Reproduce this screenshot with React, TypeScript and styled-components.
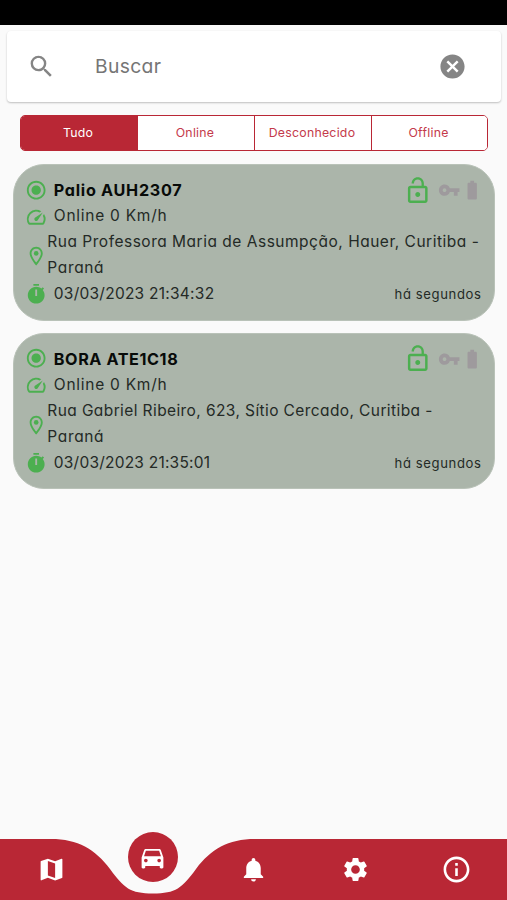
import React from "react";
import styled, { createGlobalStyle } from "styled-components";
import {
  MdSearch, MdCancel, MdRadioButtonChecked, MdLockOpen, MdVpnKey, MdBatteryFull,
  MdMap, MdDirectionsCar, MdNotifications, MdSettings, MdInfoOutline,
  MdOutlineSpeed, MdOutlineLocationOn,
} from "react-icons/md";

const red = "#b92735";
const green = "#4caf50";

const Global = createGlobalStyle`
  * { box-sizing: border-box; }
  body {
    margin: 0;
    background: #fafafa;
    font-family: Inter, "Open Sans", sans-serif;
    font-feature-settings: "cv11";
  }
  svg { display: block; flex: none; }
`;

const Screen = styled.div`
  height: 900px;
  width: 507px;
  display: flex;
  flex-direction: column;
  overflow: hidden;
`;

const StatusBar = styled.div`
  height: 25px;
  flex: none;
  background: #000;
`;

const SearchCard = styled.div`
  margin: 6px 6px 0 7px;
  height: 71px;
  flex: none;
  display: flex;
  align-items: center;
  padding: 0 34.5px 0 19.5px;
  background: #fff;
  border-radius: 4px;
  box-shadow: 0 1px 2px rgba(0, 0, 0, 0.24);
  color: #858585;
`;

const Placeholder = styled.span`
  flex: 1;
  margin: -2px 0 0 39.5px;
  font-size: 19.3px;
  letter-spacing: 0.35px;
  color: #757575;
`;

const Tabs = styled.div`
  margin: 13px 19px 0 20px;
  height: 36px;
  flex: none;
  display: grid;
  grid-template-columns: 116px 117px 117px 1fr;
  border: 1px solid ${red};
  border-radius: 5px;
  overflow: hidden;
  background: #fff;
`;

const Tab = styled.div<{ $active?: boolean }>`
  display: flex;
  align-items: center;
  justify-content: center;
  padding: 0 2px 2px 0;
  font-size: 12.3px;
  letter-spacing: 0.25px;
  color: ${(p) => (p.$active ? "#fff" : "#c43a4b")};
  background: ${(p) => (p.$active ? red : "#fff")};
  & + & { border-left: 1px solid ${red}; }
`;

const List = styled.div`
  flex: 1;
  display: flex;
  flex-direction: column;
  gap: 12.5px;
  padding: 13.4px 12px 0 13px;
`;

const Card = styled.div`
  height: 156.3px;
  padding: 12px 12.5px 0 10.8px;
  border-radius: 31px;
  background: #abb5aa;
  border: 1px solid #b9c2b8;
  color: #242a26;
`;

const Row = styled.div<{ $h: number }>`
  height: ${(p) => p.$h}px;
  display: flex;
  align-items: center;
`;

const IconSlot = styled.span<{ $w: number; $drop?: number }>`
  width: ${(p) => p.$w}px;
  flex: none;
  display: flex;
  margin-top: ${(p) => p.$drop ?? 0}px;
  color: ${green};
`;

const Name = styled.strong<{ $track: number }>`
  flex: 1;
  font-size: 16.2px;
  font-weight: 700;
  letter-spacing: ${(p) => p.$track}px;
  color: #080b09;
`;

const Text = styled.span<{ $track: number }>`
  flex: 1;
  font-size: 15.5px;
  letter-spacing: ${(p) => p.$track}px;
  white-space: nowrap;
`;

const Address = styled.div`
  font-size: 15.5px;
  line-height: 26px;
  white-space: nowrap;
`;

const Line = styled.div<{ $track: number }>`
  letter-spacing: ${(p) => p.$track}px;
`;

const Ago = styled.span`
  font-size: 13.1px;
  letter-spacing: 0.6px;
`;

const Badges = styled.span`
  display: flex;
  align-items: center;
  color: #9e9a9d;
  margin: 1px -1.6px 0 0;
`;

const LockSlot = styled.span`
  color: ${green};
  margin-right: 6px;
`;

const Nav = styled.nav`
  position: relative;
  height: 68px;
  flex: none;
`;

const NavShape = styled.svg`
  position: absolute;
  inset: 0;
`;

const NavItems = styled.div`
  position: relative;
  height: 100%;
  display: grid;
  grid-template-columns: repeat(5, 1fr);
  justify-items: center;
  padding-left: 1px;
  color: #fff;
`;

const NavItem = styled.div<{ $top?: number }>`
  margin-top: ${(p) => p.$top ?? 23}px;
`;

const ActiveItem = styled.div`
  width: 50px;
  height: 50px;
  border-radius: 50%;
  background: ${red};
  display: flex;
  align-items: center;
  justify-content: center;
`;

const StopwatchIcon = () => (
  <svg width="22.4" height="22.4" viewBox="0 0 24 24" fill="currentColor">
    <path d="M19.03 7.39L20.45 5.97C20 5.46 19.55 5 19.04 4.56L17.62 6C16.07 4.74 14.12 4 12 4C7.03 4 3 8.03 3 13S7.03 22 12 22C17 22 21 17.97 21 13C21 10.88 20.26 8.93 19.03 7.39M13 14H11V7H13V14M15 1H9V3H15V1Z" />
  </svg>
);

type Tracked = [string, number];
interface Vehicle {
  name: Tracked;
  status: Tracked;
  address: Tracked[];
  time: Tracked;
}

const vehicles: Vehicle[] = [
  {
    name: ["Palio AUH2307", 0.7],
    status: ["Online 0 Km/h", 0.74],
    address: [["Rua Professora Maria de Assumpção, Hauer, Curitiba -", 0.51], ["Paraná", 0.65]],
    time: ["03/03/2023 21:34:32", 0.25],
  },
  {
    name: ["BORA ATE1C18", 0.58],
    status: ["Online 0 Km/h", 0.74],
    address: [["Rua Gabriel Ribeiro, 623, Sítio Cercado, Curitiba -", 0.4], ["Paraná", 0.65]],
    time: ["03/03/2023 21:35:01", 0.22],
  },
];

const VehicleCard = ({ v }: { v: Vehicle }) => (
  <Card>
    <Row $h={25}>
      <IconSlot $w={29}><MdRadioButtonChecked size={22.4} /></IconSlot>
      <Name $track={v.name[1]}>{v.name[0]}</Name>
      <Badges>
        <LockSlot><MdLockOpen size={29.5} /></LockSlot>
        <MdVpnKey size={22.4} />
        <MdBatteryFull size={22.4} />
      </Badges>
    </Row>
    <Row $h={27}>
      <IconSlot $w={29} $drop={2}><MdOutlineSpeed size={22.4} /></IconSlot>
      <Text $track={v.status[1]}>{v.status[0]}</Text>
    </Row>
    <Row $h={52}>
      <IconSlot $w={22.5} $drop={2}><MdOutlineLocationOn size={22.4} /></IconSlot>
      <Address>
        {v.address.map(([t, track]) => <Line key={t} $track={track}>{t}</Line>)}
      </Address>
    </Row>
    <Row $h={25}>
      <IconSlot $w={29} $drop={1}><StopwatchIcon /></IconSlot>
      <Text $track={v.time[1]}>{v.time[0]}</Text>
      <Ago>há segundos</Ago>
    </Row>
  </Card>
);

export default function App() {
  return (
    <>
      <Global />
      <Screen>
        <StatusBar />
        <SearchCard>
          <MdSearch size={29} />
          <Placeholder>Buscar</Placeholder>
          <MdCancel size={29} />
        </SearchCard>
        <Tabs>
          <Tab $active>Tudo</Tab>
          <Tab>Online</Tab>
          <Tab>Desconhecido</Tab>
          <Tab>Offline</Tab>
        </Tabs>
        <List>
          {vehicles.map((v) => <VehicleCard key={v.name[0]} v={v} />)}
        </List>
        <Nav>
          <NavShape width="507" height="68" viewBox="0 0 507 68">
            <path
              fill={red}
              d="M0 7H51C78 7 95 17 110 37C124 56 130 61.500 153 61.500C176 61.500 182 56 196 37C211 17 228 7 255 7H507V68H0Z"
            />
          </NavShape>
          <NavItems>
            <NavItem><MdMap size={29} /></NavItem>
            <ActiveItem><MdDirectionsCar size={29} /></ActiveItem>
            <NavItem><MdNotifications size={29} /></NavItem>
            <NavItem><MdSettings size={29} /></NavItem>
            <NavItem $top={22}><MdInfoOutline size={31} /></NavItem>
          </NavItems>
        </Nav>
      </Screen>
    </>
  );
}
